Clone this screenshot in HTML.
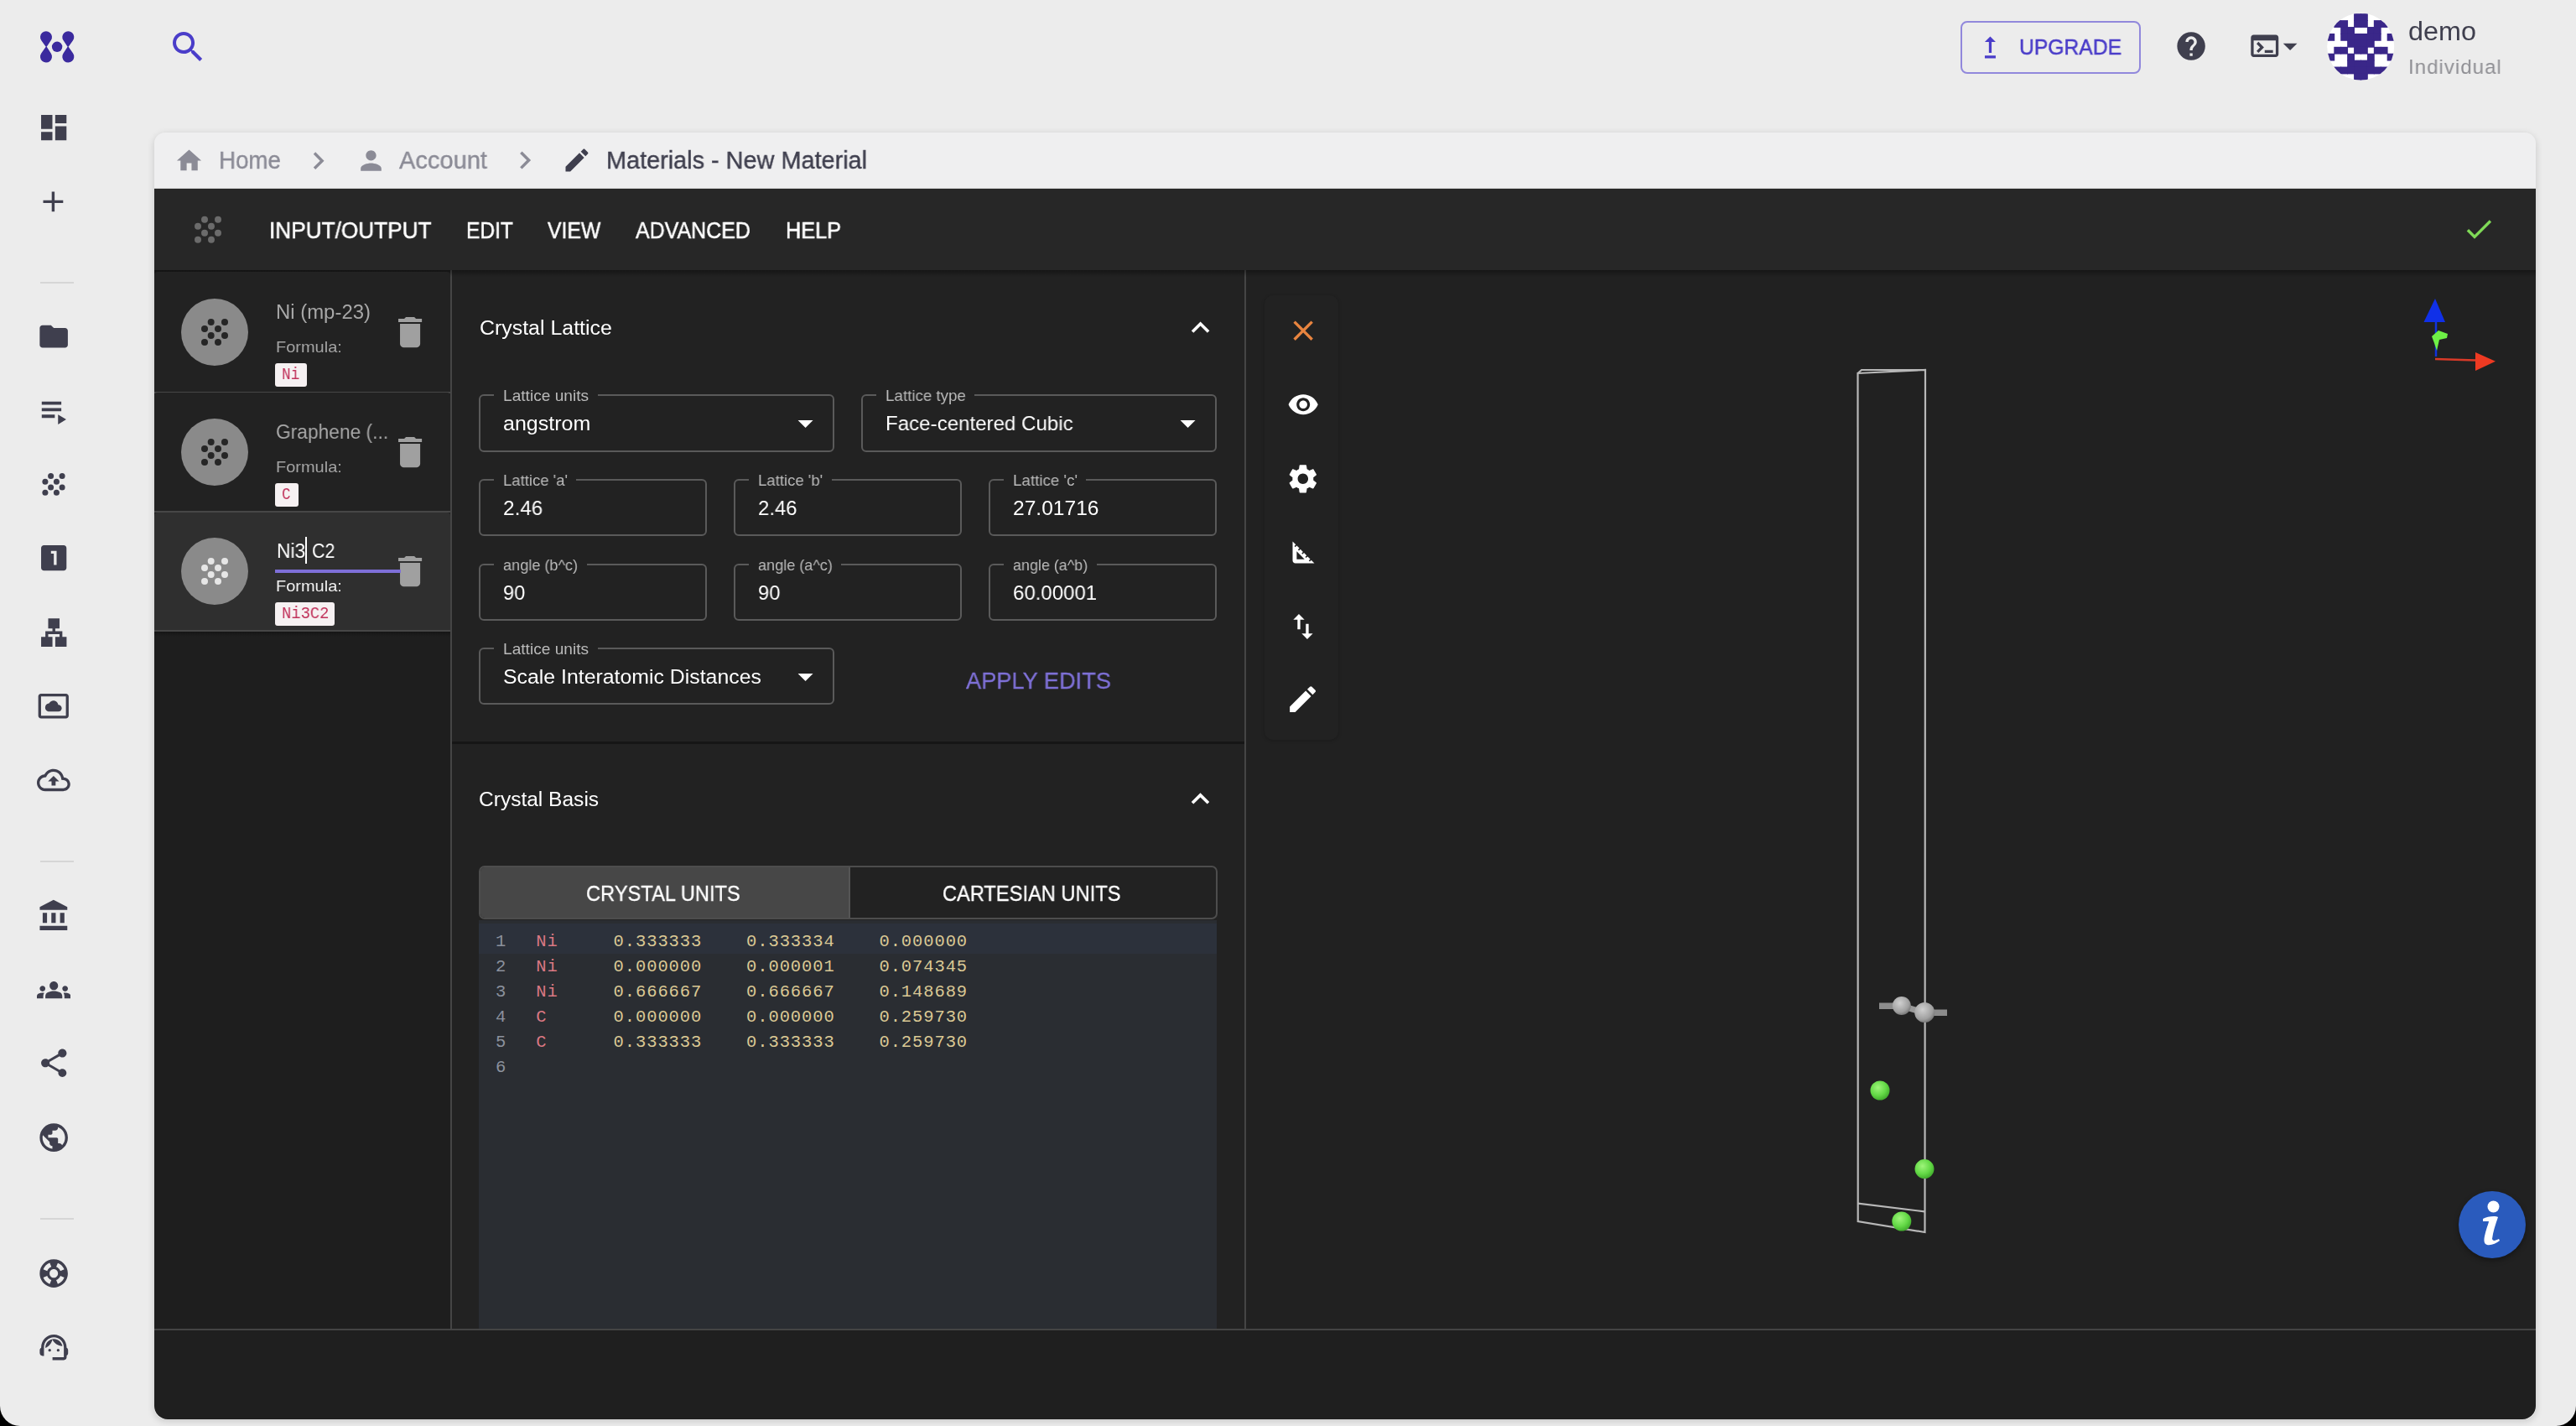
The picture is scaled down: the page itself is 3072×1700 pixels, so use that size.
<!DOCTYPE html><html><head><meta charset="utf-8"><style>html{background:#000;}html,body{margin:0;padding:0;}body{width:3072px;height:1700px;overflow:hidden;position:relative;background:#ececec;border-radius:0 0 24px 24px;font-family:"Liberation Sans",sans-serif;}</style></head><body>
<svg style="position:absolute;left:0;top:0" width="120" height="100" viewBox="0 0 120 100"><path fill="#3b2a9e" d="M55.20,56.50 L49.31,48.28 A7.0,7.0 0 1 1 60.82,48.09 ZM55.20,55.00 L60.88,63.80 A7.0,7.0 0 1 1 49.24,63.62 ZM81.10,56.50 L75.48,48.09 A7.0,7.0 0 1 1 86.99,48.28 ZM81.10,55.00 L87.06,63.62 A7.0,7.0 0 1 1 75.42,63.80 Z"/><circle cx="68.1" cy="55.8" r="6.2" fill="#3b2a9e"/></svg>
<svg style="position:absolute;left:43.93px;top:131.68px;" width="40.33" height="40.33" viewBox="0 0 24 24"><path fill="#3f3f4e" d="M3 13h8V3H3v10zm0 8h8v-6H3v6zm10 0h8V11h-8v10zm0-18v6h8V3h-8z"/></svg>
<svg style="position:absolute;left:43.45px;top:219.75px;" width="40.80" height="40.80" viewBox="0 0 24 24"><path fill="#3f3f4e" d="M19 13h-6v6h-2v-6H5v-2h6V5h2v6h6v2z"/></svg>
<div style="position:absolute;left:48px;top:336px;width:40px;height:2px;background:#d6d6d6;"></div>
<svg style="position:absolute;left:43.87px;top:381.27px;" width="40.26" height="40.26" viewBox="0 0 24 24"><path fill="#3f3f4e" d="M10 4H4c-1.1 0-1.99.9-1.99 2L2 18c0 1.1.9 2 2 2h16c1.1 0 2-.9 2-2V8c0-1.1-.9-2-2-2h-8l-2-2z"/></svg>
<svg style="position:absolute;left:42.43px;top:466.81px;" width="46.69" height="46.69" viewBox="0 0 24 24"><path fill="#3f3f4e" d="M4 10h12v2H4zm0-4h12v2H4zm0 8h8v2H4zm10 0v6l5-3z"/></svg>
<svg style="position:absolute;left:0;top:0" width="100" height="620" viewBox="0 0 100 620"><circle cx="60.6" cy="567.6" r="3.5" fill="#3f3f4e"/><circle cx="74.1" cy="567.6" r="3.5" fill="#3f3f4e"/><circle cx="53.9" cy="574.3" r="3.5" fill="#3f3f4e"/><circle cx="67.4" cy="574.3" r="3.5" fill="#3f3f4e"/><circle cx="60.6" cy="580.9" r="3.5" fill="#3f3f4e"/><circle cx="74.1" cy="580.9" r="3.5" fill="#3f3f4e"/><circle cx="53.9" cy="587.3" r="3.5" fill="#3f3f4e"/><circle cx="67.4" cy="587.3" r="3.5" fill="#3f3f4e"/></svg>
<svg style="position:absolute;left:43.73px;top:644.98px;" width="40.33" height="40.33" viewBox="0 0 24 24"><path fill="#3f3f4e" d="M19 3H5c-1.1 0-2 .9-2 2v14c0 1.1.9 2 2 2h14c1.1 0 2-.9 2-2V5c0-1.1-.9-2-2-2zm-5 14h-2V9h-2V7h4v10z"/></svg>
<svg style="position:absolute;left:43.92px;top:733.57px;" width="40.47" height="40.47" viewBox="0 0 24 24"><path fill="#3f3f4e" d="M13 22h8v-7h-3v-4h-5V9h3V2H8v7h3v2H6v4H3v7h8v-7H8v-2h8v2h-3z"/></svg>
<svg style="position:absolute;left:44.07px;top:821.92px;" width="39.56" height="39.56" viewBox="0 0 24 24"><path fill="#3f3f4e" d="M9 16h6.5c1.38 0 2.5-1.12 2.5-2.5S16.88 11 15.5 11h-.05c-.24-1.69-1.69-3-3.45-3-1.4 0-2.6.83-3.16 2.02h-.16C7.17 10.18 6 11.45 6 13c0 1.66 1.34 3 3 3zM21 3H3c-1.11 0-2 .89-2 2v14c0 1.11.89 2 2 2h18c1.11 0 2-.89 2-2V5c0-1.11-.89-2-2-2zm0 16.01H3V4.99h18v14.02z"/></svg>
<svg style="position:absolute;left:44.00px;top:909.70px;" width="39.80" height="39.80" viewBox="0 0 24 24"><path fill="#3f3f4e" d="M19.35 10.04C18.67 6.59 15.64 4 12 4 9.11 4 6.6 5.64 5.35 8.04 2.34 8.36 0 10.91 0 14c0 3.31 2.69 6 6 6h13c2.76 0 5-2.24 5-5 0-2.64-2.05-4.78-4.65-4.96zM19 18H6c-2.21 0-4-1.79-4-4 0-2.05 1.53-3.76 3.56-3.97l1.07-.11.5-.95C8.08 7.14 9.94 6 12 6c2.62 0 4.88 1.86 5.39 4.43l.3 1.5 1.53.11c1.56.1 2.78 1.41 2.78 2.96 0 1.650-1.35 3-3 3zM8 13h2.55v3h2.9v-3H16l-4-4z"/></svg>
<div style="position:absolute;left:48px;top:1026px;width:40px;height:2px;background:#d6d6d6;"></div>
<svg style="position:absolute;left:44.14px;top:1071.24px;" width="41.45" height="41.45" viewBox="0 0 24 24"><path fill="#3f3f4e" d="M4 10v7h3v-7H4zm6 0v7h3v-7h-3zM2 22h19v-3H2v3zm14-12v7h3v-7h-3zm-4.5-9L2 6v2h19V6l-9.5-5z"/></svg>
<svg style="position:absolute;left:43.80px;top:1159.70px;" width="40.40" height="40.40" viewBox="0 0 24 24"><path fill="#3f3f4e" d="M12 12.75c1.63 0 3.07.39 4.24.9 1.08.48 1.76 1.56 1.76 2.73V18H6v-1.61c0-1.18.68-2.26 1.76-2.73 1.17-.52 2.61-.91 4.24-.91zM4 13c1.1 0 2-.9 2-2s-.9-2-2-2-2 .9-2 2 .9 2 2 2zm1.13 1.1c-.37-.06-.74-.1-1.130-.1-.99 0-1.93.21-2.78.58C.48 14.9 0 15.62 0 16.43V18h4.5v-1.61c0-.83.23-1.61.63-2.29zM20 13c1.1 0 2-.9 2-2s-.9-2-2-2-2 .9-2 2 .9 2 2 2zm4 3.43c0-.81-.48-1.53-1.22-1.85-.85-.37-1.79-.58-2.78-.58-.39 0-.76.04-1.13.1.4.68.63 1.46.63 2.29V18H24v-1.57zM12 6c1.66 0 3 1.34 3 3s-1.34 3-3 3-3-1.34-3-3 1.34-3 3-3z"/></svg>
<svg style="position:absolute;left:43.75px;top:1247.01px;" width="40.51" height="40.51" viewBox="0 0 24 24"><path fill="#3f3f4e" d="M18 16.08c-.76 0-1.44.3-1.96.77L8.91 12.7c.05-.23.09-.46.09-.7s-.04-.47-.09-.7l7.05-4.11c.54.5 1.25.81 2.04.81 1.66 0 3-1.34 3-3s-1.34-3-3-3-3 1.34-3 3c0 .24.04.47.09.7L8.04 9.81C7.5 9.31 6.79 9 6 9c-1.66 0-3 1.34-3 3s1.34 3 3 3c.79 0 1.5-.31 2.04-.81l7.12 4.16c-.05.21-.08.43-.08.65 0 1.61 1.31 2.92 2.92 2.92 1.61 0 2.92-1.31 2.92-2.920s-1.31-2.92-2.92-2.92z"/></svg>
<svg style="position:absolute;left:43.84px;top:1335.54px;" width="40.32" height="40.32" viewBox="0 0 24 24"><path fill="#3f3f4e" d="M12 2C6.48 2 2 6.48 2 12s4.48 10 10 10 10-4.48 10-10S17.52 2 12 2zm-1 17.93c-3.95-.49-7-3.85-7-7.93 0-.62.08-1.21.21-1.79L9 15v1c0 1.1.9 2 2 2v1.93zm6.9-2.54c-.26-.81-1-1.39-1.9-1.39h-1v-3c0-.55-.45-1-1-1H8v-2h2c.55 0 1-.45 1-1V7h2c1.1 0 2-.9 2-2v-.41c2.93 1.19 5 4.06 5 7.41 0 2.08-.8 3.97-2.1 5.39z"/></svg>
<div style="position:absolute;left:48px;top:1452px;width:40px;height:2px;background:#d6d6d6;"></div>
<svg style="position:absolute;left:43.77px;top:1497.72px;" width="40.26" height="40.26" viewBox="0 0 24 24"><path fill="#3f3f4e" d="M12 2C6.48 2 2 6.48 2 12s4.48 10 10 10 10-4.48 10-10S17.52 2 12 2zm7.46 7.12l-2.78 1.15c-.51-1.36-1.58-2.44-2.95-2.94l1.15-2.78c2.1.8 3.77 2.47 4.58 4.57zM12 15c-1.66 0-3-1.34-3-3s1.34-3 3-3 3 1.34 3 3-1.34 3-3 3zM9.13 4.54l1.17 2.78c-1.38.5-2.47 1.59-2.98 2.97L4.54 9.13c.81-2.11 2.48-3.78 4.590-4.59zM4.54 14.87l2.78-1.15c.51 1.38 1.59 2.46 2.97 2.96l-1.17 2.78c-2.1-.81-3.77-2.48-4.58-4.59zm10.34 4.59l-1.15-2.78c1.37-.51 2.45-1.59 2.95-2.97l2.78 1.17c-.81 2.1-2.48 3.77-4.58 4.58z"/></svg>
<svg style="position:absolute;left:43.81px;top:1585.66px;" width="40.59" height="40.59" viewBox="0 0 24 24"><path fill="#3f3f4e" d="M21 12.22C21 6.73 16.74 3 12 3c-4.69 0-9 3.65-9 9.28-.6.34-1 .98-1 1.72v2c0 1.1.9 2 2 2h1v-6.1c0-3.87 3.13-7 7-7s7 3.13 7 7V19h-8v2h8c1.1 0 2-.9 2-2v-1.22c.59-.31 1-.92 1-1.64v-2.3c0-.7-.41-1.31-1-1.62zM9 13a1 1 0 1 0 0 2 1 1 0 1 0 0-2zm6 0a1 1 0 1 0 0 2 1 1 0 1 0 0-2zM18 11.03C17.52 8.18 15.04 6 12.05 6c-3.03 0-6.29 2.51-6.03 6.45 2.47-1.01 4.33-3.21 4.86-5.89 1.31 2.63 4 4.44 7.12 4.47z"/></svg>
<svg style="position:absolute;left:199.58px;top:31.88px;" width="48.16" height="48.16" viewBox="0 0 24 24"><path fill="#4a3dc9" d="M15.5 14h-.79l-.28-.27C15.41 12.59 16 11.11 16 9.5 16 5.91 13.09 3 9.5 3S3 5.910 3 9.5 5.91 16 9.5 16c1.61 0 3.09-.59 4.23-1.57l.27.28v.79l5 4.99L20.49 19l-4.99-5zm-6 0C7.01 14 5 11.99 5 9.5S7.01 5 9.5 5 14 7.01 14 9.5 11.99 14 9.5 14z"/></svg>
<div style="position:absolute;left:2337.5px;top:24.6px;width:211px;height:59px;border:2px solid #9188dc;border-radius:8px;"></div>
<svg style="position:absolute;left:2353.69px;top:37.19px;" width="38.93" height="38.93" viewBox="0 0 24 24"><path fill="#4a3dc9" d="M16 18v2H8v-2h8zM11 7.99V16h2V7.99h3L12 4 8 7.99h3z"/></svg>
<div style="position:absolute;left:2408.00px;top:40.69px;font-size:26px;line-height:31.20px;font-family:'Liberation Sans', sans-serif;color:#4a3dc9;white-space:pre;will-change:transform;transform:scaleX(0.9497);transform-origin:0.00px 0;-webkit-text-stroke:0.5px #4a3dc9;">UPGRADE</div>
<svg style="position:absolute;left:2592.90px;top:35.20px;" width="40.20" height="40.20" viewBox="0 0 24 24"><path fill="#3f3f4e" d="M12 2C6.48 2 2 6.48 2 12s4.48 10 10 10 10-4.48 10-10S17.52 2 12 2zm1 17h-2v-2h2v2zm2.07-7.75l-.9.92C13.45 12.9 13 13.5 13 15h-2v-.5c0-1.1.45-2.1 1.17-2.83l1.24-1.26c.37-.36.59-.86.59-1.41 0-1.1-.9-2-2-2s-2 .9-2 2H8c0-2.21 1.79-4 4-4s4 1.79 4 4c0 .88-.36 1.68-.93 2.25z"/></svg>
<svg style="position:absolute;left:2680.53px;top:35.23px;" width="39.54" height="39.54" viewBox="0 0 24 24"><path fill="#3f3f4e" d="M20 4H4c-1.11 0-2 .9-2 2v12c0 1.1.89 2 2 2h16c1.1 0 2-.9 2-2V6c0-1.1-.89-2-2-2zm0 14H4V8h16v10zm-2-1h-6v-2h6v2zM7.5 17l-1.41-1.41L8.67 13l-2.59-2.59L7.5 9l4 4-4 4z"/></svg>
<svg style="position:absolute;left:2710.65px;top:34.81px;" width="40.20" height="40.20" viewBox="0 0 24 24"><path fill="#3f3f4e" d="M7 10l5 5 5-5z"/></svg>
<svg style="position:absolute;left:2775px;top:15px" width="81" height="82" viewBox="0 0 81 82"><defs><clipPath id="avc"><circle cx="40.2" cy="40.6" r="40"/></clipPath></defs><circle cx="40.2" cy="40.6" r="40" fill="#fff"/><g clip-path="url(#avc)" fill="#3a2789"><rect x="32.08" y="1.20" width="8.82" height="8.82"/><rect x="40.00" y="1.20" width="8.82" height="8.82"/><rect x="8.32" y="9.12" width="8.82" height="8.82"/><rect x="16.24" y="9.12" width="8.82" height="8.82"/><rect x="32.08" y="9.12" width="8.82" height="8.82"/><rect x="40.00" y="9.12" width="8.82" height="8.82"/><rect x="55.84" y="9.12" width="8.82" height="8.82"/><rect x="63.76" y="9.12" width="8.82" height="8.82"/><rect x="16.24" y="17.04" width="8.82" height="8.82"/><rect x="24.16" y="17.04" width="8.82" height="8.82"/><rect x="47.92" y="17.04" width="8.82" height="8.82"/><rect x="55.84" y="17.04" width="8.82" height="8.82"/><rect x="0.40" y="24.96" width="8.82" height="8.82"/><rect x="16.24" y="24.96" width="8.82" height="8.82"/><rect x="24.16" y="24.96" width="8.82" height="8.82"/><rect x="32.08" y="24.96" width="8.82" height="8.82"/><rect x="40.00" y="24.96" width="8.82" height="8.82"/><rect x="47.92" y="24.96" width="8.82" height="8.82"/><rect x="55.84" y="24.96" width="8.82" height="8.82"/><rect x="71.68" y="24.96" width="8.82" height="8.82"/><rect x="24.16" y="32.88" width="8.82" height="8.82"/><rect x="32.08" y="32.88" width="8.82" height="8.82"/><rect x="40.00" y="32.88" width="8.82" height="8.82"/><rect x="47.92" y="32.88" width="8.82" height="8.82"/><rect x="8.32" y="40.80" width="8.82" height="8.82"/><rect x="16.24" y="40.80" width="8.82" height="8.82"/><rect x="32.08" y="40.80" width="8.82" height="8.82"/><rect x="40.00" y="40.80" width="8.82" height="8.82"/><rect x="55.84" y="40.80" width="8.82" height="8.82"/><rect x="63.76" y="40.80" width="8.82" height="8.82"/><rect x="0.40" y="48.72" width="8.82" height="8.82"/><rect x="24.16" y="48.72" width="8.82" height="8.82"/><rect x="47.92" y="48.72" width="8.82" height="8.82"/><rect x="71.68" y="48.72" width="8.82" height="8.82"/><rect x="24.16" y="56.64" width="8.82" height="8.82"/><rect x="32.08" y="56.64" width="8.82" height="8.82"/><rect x="40.00" y="56.64" width="8.82" height="8.82"/><rect x="47.92" y="56.64" width="8.82" height="8.82"/><rect x="8.32" y="64.56" width="8.82" height="8.82"/><rect x="16.24" y="64.56" width="8.82" height="8.82"/><rect x="24.16" y="64.56" width="8.82" height="8.82"/><rect x="32.08" y="64.56" width="8.82" height="8.82"/><rect x="40.00" y="64.56" width="8.82" height="8.82"/><rect x="47.92" y="64.56" width="8.82" height="8.82"/><rect x="55.84" y="64.56" width="8.82" height="8.82"/><rect x="63.76" y="64.56" width="8.82" height="8.82"/><rect x="32.08" y="72.48" width="8.82" height="8.82"/><rect x="40.00" y="72.48" width="8.82" height="8.82"/></g></svg>
<div style="position:absolute;left:2871.80px;top:18.66px;font-size:31px;line-height:37.20px;font-family:'Liberation Sans', sans-serif;color:#3f3f4e;white-space:pre;will-change:transform;transform:scaleX(1.0439);transform-origin:0.00px 0;">demo</div>
<div style="position:absolute;left:2871.80px;top:64.61px;font-size:24.5px;line-height:29.40px;font-family:'Liberation Sans', sans-serif;letter-spacing:1px;color:#8f8f94;white-space:pre;will-change:transform;transform:scaleX(0.9848);transform-origin:0.00px 0;">Individual</div>
<div style="position:absolute;left:184px;top:158px;width:2840px;height:1534px;border-radius:14px;background:transparent;box-shadow:0 2px 8px rgba(0,0,0,0.16);"></div>
<div style="position:absolute;left:184px;top:158px;width:2840px;height:67px;border-radius:13px 13px 0 0;background:#efeff0;"></div>
<svg style="position:absolute;left:207.98px;top:173.71px;" width="35.05" height="35.05" viewBox="0 0 24 24"><path fill="#8b8b96" d="M10 20v-6h4v6h5v-8h3L12 3 2 12h3v8z"/></svg>
<div style="position:absolute;left:261.00px;top:173.30px;font-size:30px;line-height:36.00px;font-family:'Liberation Sans', sans-serif;color:#8b8b96;white-space:pre;will-change:transform;transform:scaleX(0.9238);transform-origin:0.00px 0;-webkit-text-stroke:0.4px #8b8b96;">Home</div>
<svg style="position:absolute;left:359.32px;top:170.87px;" width="41.35" height="41.35" viewBox="0 0 24 24"><path fill="#8b8b96" d="M10 6L8.59 7.41 13.17 12l-4.58 4.59L10 18l6-6z"/></svg>
<svg style="position:absolute;left:423.51px;top:172.86px;" width="36.98" height="36.98" viewBox="0 0 24 24"><path fill="#8b8b96" d="M12 12c2.21 0 4-1.79 4-4s-1.79-4-4-4-4 1.79-4 4 1.79 4 4 4zm0 2c-2.67 0-8 1.34-8 4v2h16v-2c0-2.66-5.33-4-8-4z"/></svg>
<div style="position:absolute;left:476.00px;top:173.30px;font-size:30px;line-height:36.00px;font-family:'Liberation Sans', sans-serif;color:#8b8b96;white-space:pre;will-change:transform;transform:scaleX(0.9682);transform-origin:0.00px 0;-webkit-text-stroke:0.4px #8b8b96;">Account</div>
<svg style="position:absolute;left:604.65px;top:170.47px;" width="42.16" height="42.16" viewBox="0 0 24 24"><path fill="#8b8b96" d="M10 6L8.59 7.41 13.17 12l-4.58 4.59L10 18l6-6z"/></svg>
<svg style="position:absolute;left:669.68px;top:173.04px;" width="35.93" height="35.93" viewBox="0 0 24 24"><path fill="#3f3f4e" d="M3 17.25V21h3.75L17.81 9.94l-3.75-3.75L3 17.25zM20.71 7.04c.39-.39.39-1.02 0-1.41l-2.34-2.34c-.39-.39-1.02-.39-1.41 0l-1.830 1.83 3.75 3.75 1.83-1.83z"/></svg>
<div style="position:absolute;left:722.60px;top:173.30px;font-size:30px;line-height:36.00px;font-family:'Liberation Sans', sans-serif;color:#3f3f4e;white-space:pre;will-change:transform;transform:scaleX(0.9617);transform-origin:0.00px 0;-webkit-text-stroke:0.4px #3f3f4e;">Materials - New Material</div>
<div style="position:absolute;left:184px;top:224px;width:2840px;height:1px;background:#d2d2d2;"></div>
<div style="position:absolute;left:184px;top:225px;width:2840px;height:97px;background:#272727;"></div>
<svg style="position:absolute;left:200px;top:240px" width="80" height="70" viewBox="200 240 80 70"><circle cx="244" cy="261.8" r="4" fill="#6b6b6b"/><circle cx="260" cy="261.8" r="4" fill="#6b6b6b"/><circle cx="236" cy="269.8" r="4" fill="#6b6b6b"/><circle cx="252" cy="269.8" r="4" fill="#6b6b6b"/><circle cx="244" cy="277.8" r="4" fill="#6b6b6b"/><circle cx="260" cy="277.8" r="4" fill="#6b6b6b"/><circle cx="236" cy="285.8" r="4" fill="#6b6b6b"/><circle cx="252" cy="285.8" r="4" fill="#6b6b6b"/></svg>
<div style="position:absolute;left:320.80px;top:258.94px;font-size:27px;line-height:32.40px;font-family:'Liberation Sans', sans-serif;color:#ffffff;white-space:pre;will-change:transform;transform:scaleX(0.9703);transform-origin:0.00px 0;-webkit-text-stroke:0.5px #ffffff;">INPUT/OUTPUT</div>
<div style="position:absolute;left:556.00px;top:258.94px;font-size:27px;line-height:32.40px;font-family:'Liberation Sans', sans-serif;color:#ffffff;white-space:pre;will-change:transform;transform:scaleX(0.9097);transform-origin:0.00px 0;-webkit-text-stroke:0.5px #ffffff;">EDIT</div>
<div style="position:absolute;left:652.70px;top:258.94px;font-size:27px;line-height:32.40px;font-family:'Liberation Sans', sans-serif;color:#ffffff;white-space:pre;will-change:transform;transform:scaleX(0.9176);transform-origin:0.00px 0;-webkit-text-stroke:0.5px #ffffff;">VIEW</div>
<div style="position:absolute;left:758.00px;top:258.94px;font-size:27px;line-height:32.40px;font-family:'Liberation Sans', sans-serif;color:#ffffff;white-space:pre;will-change:transform;transform:scaleX(0.9251);transform-origin:0.00px 0;-webkit-text-stroke:0.5px #ffffff;">ADVANCED</div>
<div style="position:absolute;left:937.00px;top:258.94px;font-size:27px;line-height:32.40px;font-family:'Liberation Sans', sans-serif;color:#ffffff;white-space:pre;will-change:transform;transform:scaleX(0.9366);transform-origin:0.00px 0;-webkit-text-stroke:0.5px #ffffff;">HELP</div>
<svg style="position:absolute;left:2935.58px;top:253.43px;" width="40.15" height="40.15" viewBox="0 0 24 24"><path fill="#7fd957" d="M9 16.17L4.83 12l-1.42 1.41L9 19 21 7l-1.41-1.41z"/></svg>
<div style="position:absolute;left:184px;top:322px;width:354px;height:1263px;background:#1e1e1e;"></div>
<div style="position:absolute;left:537px;top:322px;width:2px;height:1263px;background:#454545;"></div>
<div style="position:absolute;left:539px;top:322px;width:945px;height:1263px;background:#161616;"></div>
<div style="position:absolute;left:539px;top:322px;width:945px;height:562px;background:#222222;"></div>
<div style="position:absolute;left:539px;top:887px;width:945px;height:698px;background:#222222;"></div>
<div style="position:absolute;left:1484px;top:322px;width:2px;height:1263px;background:#454545;"></div>
<div style="position:absolute;left:1486px;top:322px;width:1538px;height:1263px;background:#212121;"></div>
<div style="position:absolute;left:184px;top:322px;width:2840px;height:8px;background:linear-gradient(rgba(0,0,0,0.35),rgba(0,0,0,0));"></div>
<div style="position:absolute;left:184px;top:1586px;width:2840px;height:106px;border-radius:0 0 16px 16px;background:#1f1f1f;"></div>
<div style="position:absolute;left:184px;top:324px;width:353px;height:143px;background:#222222;border-radius:4px 4px 0 0;"></div>
<div style="position:absolute;left:184px;top:467px;width:353px;height:2px;background:#474747;"></div>
<div style="position:absolute;left:216px;top:356px;width:80px;height:80px;border-radius:50%;background:#8a8a8a;"></div>
<svg style="position:absolute;left:230px;top:366px" width="50" height="50" viewBox="230 366 50 50"><circle cx="251.7" cy="384" r="4" fill="#262626"/><circle cx="268" cy="384" r="4" fill="#262626"/><circle cx="244" cy="392" r="4" fill="#262626"/><circle cx="260" cy="392" r="4" fill="#262626"/><circle cx="251.7" cy="400" r="4" fill="#262626"/><circle cx="268" cy="400" r="4" fill="#262626"/><circle cx="244" cy="408" r="4" fill="#262626"/><circle cx="260" cy="408" r="4" fill="#262626"/></svg>
<svg style="position:absolute;left:464.81px;top:371.91px;" width="48.17" height="48.17" viewBox="0 0 24 24"><path fill="#a0a0a0" d="M6 19c0 1.1.9 2 2 2h8c1.1 0 2-.9 2-2V7H6v12zM19 4h-3.5l-1-1h-5l-1 1H5v2h14V4z"/></svg>
<div style="position:absolute;left:329.20px;top:402.72px;font-size:19px;line-height:22.80px;font-family:'Liberation Sans', sans-serif;color:#a3a3a3;white-space:pre;will-change:transform;transform:scaleX(1.0513);transform-origin:0.00px 0;">Formula:</div>
<div style="position:absolute;left:328px;top:433px;width:38px;height:28px;background:#f6f1f2;border-radius:3px;"></div>
<div style="position:absolute;left:335.70px;top:436.10px;font-size:19.5px;line-height:23.40px;font-family:'Liberation Mono', monospace;color:#c0315a;white-space:pre;will-change:transform;transform:scaleX(0.9103);transform-origin:0.00px 0;">Ni</div>
<div style="position:absolute;left:184px;top:468px;width:353px;height:141px;background:#222222;border-radius:4px 4px 0 0;"></div>
<div style="position:absolute;left:184px;top:609px;width:353px;height:2px;background:#474747;"></div>
<div style="position:absolute;left:216px;top:499px;width:80px;height:80px;border-radius:50%;background:#8a8a8a;"></div>
<svg style="position:absolute;left:230px;top:509px" width="50" height="50" viewBox="230 366 50 50"><circle cx="251.7" cy="384" r="4" fill="#262626"/><circle cx="268" cy="384" r="4" fill="#262626"/><circle cx="244" cy="392" r="4" fill="#262626"/><circle cx="260" cy="392" r="4" fill="#262626"/><circle cx="251.7" cy="400" r="4" fill="#262626"/><circle cx="268" cy="400" r="4" fill="#262626"/><circle cx="244" cy="408" r="4" fill="#262626"/><circle cx="260" cy="408" r="4" fill="#262626"/></svg>
<svg style="position:absolute;left:464.81px;top:514.91px;" width="48.17" height="48.17" viewBox="0 0 24 24"><path fill="#a0a0a0" d="M6 19c0 1.1.9 2 2 2h8c1.1 0 2-.9 2-2V7H6v12zM19 4h-3.5l-1-1h-5l-1 1H5v2h14V4z"/></svg>
<div style="position:absolute;left:329.20px;top:545.72px;font-size:19px;line-height:22.80px;font-family:'Liberation Sans', sans-serif;color:#a3a3a3;white-space:pre;will-change:transform;transform:scaleX(1.0513);transform-origin:0.00px 0;">Formula:</div>
<div style="position:absolute;left:328px;top:576px;width:28px;height:28px;background:#f6f1f2;border-radius:3px;"></div>
<div style="position:absolute;left:335.70px;top:579.10px;font-size:19.5px;line-height:23.40px;font-family:'Liberation Mono', monospace;color:#c0315a;white-space:pre;will-change:transform;transform:scaleX(0.8974);transform-origin:0.00px 0;">C</div>
<div style="position:absolute;left:184px;top:611px;width:353px;height:140px;background:#2f2f2f;border-radius:4px 4px 0 0;"></div>
<div style="position:absolute;left:184px;top:751px;width:353px;height:2px;background:#474747;"></div>
<div style="position:absolute;left:216px;top:641px;width:80px;height:80px;border-radius:50%;background:#8a8a8a;"></div>
<svg style="position:absolute;left:230px;top:651px" width="50" height="50" viewBox="230 366 50 50"><circle cx="251.7" cy="384" r="4" fill="#e6e6e6"/><circle cx="268" cy="384" r="4" fill="#e6e6e6"/><circle cx="244" cy="392" r="4" fill="#e6e6e6"/><circle cx="260" cy="392" r="4" fill="#e6e6e6"/><circle cx="251.7" cy="400" r="4" fill="#e6e6e6"/><circle cx="268" cy="400" r="4" fill="#e6e6e6"/><circle cx="244" cy="408" r="4" fill="#e6e6e6"/><circle cx="260" cy="408" r="4" fill="#e6e6e6"/></svg>
<svg style="position:absolute;left:464.81px;top:656.91px;" width="48.17" height="48.17" viewBox="0 0 24 24"><path fill="#a0a0a0" d="M6 19c0 1.1.9 2 2 2h8c1.1 0 2-.9 2-2V7H6v12zM19 4h-3.5l-1-1h-5l-1 1H5v2h14V4z"/></svg>
<div style="position:absolute;left:329.20px;top:687.72px;font-size:19px;line-height:22.80px;font-family:'Liberation Sans', sans-serif;color:#f0f0f0;white-space:pre;will-change:transform;transform:scaleX(1.0513);transform-origin:0.00px 0;">Formula:</div>
<div style="position:absolute;left:328px;top:718px;width:71px;height:28px;background:#f6f1f2;border-radius:3px;"></div>
<div style="position:absolute;left:335.70px;top:721.10px;font-size:19.5px;line-height:23.40px;font-family:'Liberation Mono', monospace;color:#c0315a;white-space:pre;will-change:transform;transform:scaleX(0.9641);transform-origin:0.00px 0;">Ni3C2</div>
<div style="position:absolute;left:329.00px;top:358.46px;font-size:23.5px;line-height:28.20px;font-family:'Liberation Sans', sans-serif;color:#a8a8a8;white-space:pre;will-change:transform;transform:scaleX(1.0177);transform-origin:0.00px 0;">Ni (mp-23)</div>
<div style="position:absolute;left:329.00px;top:501.46px;font-size:23.5px;line-height:28.20px;font-family:'Liberation Sans', sans-serif;color:#a8a8a8;white-space:pre;will-change:transform;transform:scaleX(0.9681);transform-origin:0.00px 0;">Graphene (...</div>
<div style="position:absolute;left:329.60px;top:642.86px;font-size:23.5px;line-height:28.20px;font-family:'Liberation Sans', sans-serif;color:#ffffff;white-space:pre;will-change:transform;transform:scaleX(0.9702);transform-origin:0.00px 0;">Ni3</div>
<div style="position:absolute;left:364px;top:640px;width:2px;height:32px;background:#ffffff;"></div>
<div style="position:absolute;left:372.40px;top:642.86px;font-size:23.5px;line-height:28.20px;font-family:'Liberation Sans', sans-serif;color:#ffffff;white-space:pre;will-change:transform;transform:scaleX(0.9109);transform-origin:0.00px 0;">C2</div>
<div style="position:absolute;left:184px;top:753px;width:353px;height:6px;background:linear-gradient(rgba(0,0,0,0.3),rgba(0,0,0,0));"></div>
<div style="position:absolute;left:328px;top:679px;width:150px;height:4px;background:#7e6fd8;"></div>
<div style="position:absolute;left:571.80px;top:376.56px;font-size:23.5px;line-height:28.20px;font-family:'Liberation Sans', sans-serif;color:#ffffff;white-space:pre;will-change:transform;transform:scaleX(1.0600);transform-origin:0.00px 0;">Crystal Lattice</div>
<svg style="position:absolute;left:1410.16px;top:368.94px;" width="43.17" height="43.17" viewBox="0 0 24 24"><path fill="#ffffff" d="M12 8l-6 6 1.41 1.41L12 10.83l4.59 4.58L18 14z"/></svg>
<div style="position:absolute;left:571px;top:470px;width:420px;height:65px;border:2px solid #5a5a5a;border-radius:6px;"></div>
<div style="position:absolute;left:588.5px;top:468px;width:124.0px;height:6px;background:#222222;"></div>
<div style="position:absolute;left:599.50px;top:460.72px;font-size:19px;line-height:22.80px;font-family:'Liberation Sans', sans-serif;color:#bababa;white-space:pre;will-change:transform;transform:scaleX(1.0063);transform-origin:0.00px 0;">Lattice units</div>
<div style="position:absolute;left:599.50px;top:489.81px;font-size:24.5px;line-height:29.40px;font-family:'Liberation Sans', sans-serif;color:#ffffff;white-space:pre;will-change:transform;transform:scaleX(1.0209);transform-origin:0.00px 0;">angstrom</div>
<svg style="position:absolute;left:939.40px;top:483.00px;" width="43.20" height="43.20" viewBox="0 0 24 24"><path fill="#ffffff" d="M7 10l5 5 5-5z"/></svg>
<div style="position:absolute;left:1027px;top:470px;width:420px;height:65px;border:2px solid #5a5a5a;border-radius:6px;"></div>
<div style="position:absolute;left:1044.5px;top:468px;width:117.9px;height:6px;background:#222222;"></div>
<div style="position:absolute;left:1055.50px;top:460.72px;font-size:19px;line-height:22.80px;font-family:'Liberation Sans', sans-serif;color:#bababa;white-space:pre;will-change:transform;transform:scaleX(0.9868);transform-origin:0.00px 0;">Lattice type</div>
<div style="position:absolute;left:1055.50px;top:489.81px;font-size:24.5px;line-height:29.40px;font-family:'Liberation Sans', sans-serif;color:#ffffff;white-space:pre;will-change:transform;transform:scaleX(0.9834);transform-origin:0.00px 0;">Face-centered Cubic</div>
<svg style="position:absolute;left:1395.40px;top:483.00px;" width="43.20" height="43.20" viewBox="0 0 24 24"><path fill="#ffffff" d="M7 10l5 5 5-5z"/></svg>
<div style="position:absolute;left:571px;top:571px;width:268px;height:64px;border:2px solid #5a5a5a;border-radius:6px;"></div>
<div style="position:absolute;left:588.5px;top:569px;width:98.9px;height:6px;background:#222222;"></div>
<div style="position:absolute;left:599.50px;top:561.72px;font-size:19px;line-height:22.80px;font-family:'Liberation Sans', sans-serif;color:#bababa;white-space:pre;will-change:transform;transform:scaleX(0.9729);transform-origin:0.00px 0;">Lattice 'a'</div>
<div style="position:absolute;left:599.50px;top:590.81px;font-size:24.5px;line-height:29.40px;font-family:'Liberation Sans', sans-serif;color:#ffffff;white-space:pre;will-change:transform;transform:scaleX(0.9905);transform-origin:0.00px 0;">2.46</div>
<div style="position:absolute;left:875px;top:571px;width:268px;height:64px;border:2px solid #5a5a5a;border-radius:6px;"></div>
<div style="position:absolute;left:892.5px;top:569px;width:99.1px;height:6px;background:#222222;"></div>
<div style="position:absolute;left:903.50px;top:561.72px;font-size:19px;line-height:22.80px;font-family:'Liberation Sans', sans-serif;color:#bababa;white-space:pre;will-change:transform;transform:scaleX(0.9755);transform-origin:0.00px 0;">Lattice 'b'</div>
<div style="position:absolute;left:903.50px;top:590.81px;font-size:24.5px;line-height:29.40px;font-family:'Liberation Sans', sans-serif;color:#ffffff;white-space:pre;will-change:transform;transform:scaleX(0.9758);transform-origin:0.00px 0;">2.46</div>
<div style="position:absolute;left:1179px;top:571px;width:268px;height:64px;border:2px solid #5a5a5a;border-radius:6px;"></div>
<div style="position:absolute;left:1196.5px;top:569px;width:98.9px;height:6px;background:#222222;"></div>
<div style="position:absolute;left:1207.50px;top:561.72px;font-size:19px;line-height:22.80px;font-family:'Liberation Sans', sans-serif;color:#bababa;white-space:pre;will-change:transform;transform:scaleX(0.9860);transform-origin:0.00px 0;">Lattice 'c'</div>
<div style="position:absolute;left:1207.50px;top:590.81px;font-size:24.5px;line-height:29.40px;font-family:'Liberation Sans', sans-serif;color:#ffffff;white-space:pre;will-change:transform;transform:scaleX(1.0033);transform-origin:0.00px 0;">27.01716</div>
<div style="position:absolute;left:571px;top:672px;width:268px;height:64px;border:2px solid #5a5a5a;border-radius:6px;"></div>
<div style="position:absolute;left:588.5px;top:670px;width:111.1px;height:6px;background:#222222;"></div>
<div style="position:absolute;left:599.50px;top:662.72px;font-size:19px;line-height:22.80px;font-family:'Liberation Sans', sans-serif;color:#bababa;white-space:pre;will-change:transform;transform:scaleX(0.9541);transform-origin:0.00px 0;">angle (b^c)</div>
<div style="position:absolute;left:599.50px;top:691.81px;font-size:24.5px;line-height:29.40px;font-family:'Liberation Sans', sans-serif;color:#ffffff;white-space:pre;will-change:transform;transform:scaleX(0.9597);transform-origin:0.00px 0;">90</div>
<div style="position:absolute;left:875px;top:672px;width:268px;height:64px;border:2px solid #5a5a5a;border-radius:6px;"></div>
<div style="position:absolute;left:892.5px;top:670px;width:110.9px;height:6px;background:#222222;"></div>
<div style="position:absolute;left:903.50px;top:662.72px;font-size:19px;line-height:22.80px;font-family:'Liberation Sans', sans-serif;color:#bababa;white-space:pre;will-change:transform;transform:scaleX(0.9520);transform-origin:0.00px 0;">angle (a^c)</div>
<div style="position:absolute;left:903.50px;top:691.81px;font-size:24.5px;line-height:29.40px;font-family:'Liberation Sans', sans-serif;color:#ffffff;white-space:pre;will-change:transform;transform:scaleX(0.9671);transform-origin:0.00px 0;">90</div>
<div style="position:absolute;left:1179px;top:672px;width:268px;height:64px;border:2px solid #5a5a5a;border-radius:6px;"></div>
<div style="position:absolute;left:1196.5px;top:670px;width:111.1px;height:6px;background:#222222;"></div>
<div style="position:absolute;left:1207.50px;top:662.72px;font-size:19px;line-height:22.80px;font-family:'Liberation Sans', sans-serif;color:#bababa;white-space:pre;will-change:transform;transform:scaleX(0.9436);transform-origin:0.00px 0;">angle (a^b)</div>
<div style="position:absolute;left:1207.50px;top:691.81px;font-size:24.5px;line-height:29.40px;font-family:'Liberation Sans', sans-serif;color:#ffffff;white-space:pre;will-change:transform;transform:scaleX(0.9798);transform-origin:0.00px 0;">60.00001</div>
<div style="position:absolute;left:571px;top:772px;width:420px;height:64px;border:2px solid #5a5a5a;border-radius:6px;"></div>
<div style="position:absolute;left:588.5px;top:770px;width:124.0px;height:6px;background:#222222;"></div>
<div style="position:absolute;left:599.50px;top:762.72px;font-size:19px;line-height:22.80px;font-family:'Liberation Sans', sans-serif;color:#bababa;white-space:pre;will-change:transform;transform:scaleX(1.0063);transform-origin:0.00px 0;">Lattice units</div>
<div style="position:absolute;left:599.50px;top:791.81px;font-size:24.5px;line-height:29.40px;font-family:'Liberation Sans', sans-serif;color:#ffffff;white-space:pre;will-change:transform;transform:scaleX(1.0139);transform-origin:0.00px 0;">Scale Interatomic Distances</div>
<svg style="position:absolute;left:939.40px;top:785.00px;" width="43.20" height="43.20" viewBox="0 0 24 24"><path fill="#ffffff" d="M7 10l5 5 5-5z"/></svg>
<div style="position:absolute;left:1152.40px;top:795.40px;font-size:28px;line-height:33.60px;font-family:'Liberation Sans', sans-serif;color:#7e70d6;white-space:pre;will-change:transform;transform:scaleX(0.9722);transform-origin:0.00px 0;-webkit-text-stroke:0.3px #7e70d6;">APPLY EDITS</div>
<div style="position:absolute;left:571.40px;top:939.46px;font-size:23.5px;line-height:28.20px;font-family:'Liberation Sans', sans-serif;color:#ffffff;white-space:pre;will-change:transform;transform:scaleX(1.0436);transform-origin:0.00px 0;">Crystal Basis</div>
<svg style="position:absolute;left:1410.36px;top:930.74px;" width="42.97" height="42.97" viewBox="0 0 24 24"><path fill="#ffffff" d="M12 8l-6 6 1.41 1.41L12 10.83l4.59 4.58L18 14z"/></svg>
<div style="position:absolute;left:571px;top:1032px;width:877px;height:60px;border:2px solid #4d4d4d;border-radius:7px;overflow:hidden;"><div style="position:absolute;left:0;top:0;width:439px;height:60px;background:#474747;border-right:2px solid #555;"></div></div>
<div style="position:absolute;left:699.40px;top:1050.24px;font-size:25px;line-height:30.00px;font-family:'Liberation Sans', sans-serif;color:#ffffff;white-space:pre;will-change:transform;transform:scaleX(0.9474);transform-origin:0.00px 0;-webkit-text-stroke:0.3px #fff;">CRYSTAL UNITS</div>
<div style="position:absolute;left:1124.20px;top:1050.24px;font-size:25px;line-height:30.00px;font-family:'Liberation Sans', sans-serif;color:#ffffff;white-space:pre;will-change:transform;transform:scaleX(0.9456);transform-origin:0.00px 0;-webkit-text-stroke:0.3px #fff;">CARTESIAN UNITS</div>
<div style="position:absolute;left:571px;top:1097px;width:880px;height:488px;background:#2a2d32;"></div>
<div style="position:absolute;left:571px;top:1101px;width:880px;height:36px;background:#2c313b;"></div>
<div style="position:absolute;left:591px;top:1110.84px;font-size:20.5px;letter-spacing:0.900px;line-height:24.60px;font-family:'Liberation Mono',monospace;color:#8b919d;white-space:pre;">1</div>
<div style="position:absolute;left:639.20px;top:1110.84px;font-size:20.5px;letter-spacing:0.900px;line-height:24.60px;font-family:'Liberation Mono',monospace;white-space:pre;"><span style="color:#da7883">Ni</span>     <span style="color:#dac894">0.333333    0.333334    0.000000</span></div>
<div style="position:absolute;left:591px;top:1140.94px;font-size:20.5px;letter-spacing:0.900px;line-height:24.60px;font-family:'Liberation Mono',monospace;color:#8b919d;white-space:pre;">2</div>
<div style="position:absolute;left:639.20px;top:1140.94px;font-size:20.5px;letter-spacing:0.900px;line-height:24.60px;font-family:'Liberation Mono',monospace;white-space:pre;"><span style="color:#da7883">Ni</span>     <span style="color:#dac894">0.000000    0.000001    0.074345</span></div>
<div style="position:absolute;left:591px;top:1171.04px;font-size:20.5px;letter-spacing:0.900px;line-height:24.60px;font-family:'Liberation Mono',monospace;color:#8b919d;white-space:pre;">3</div>
<div style="position:absolute;left:639.20px;top:1171.04px;font-size:20.5px;letter-spacing:0.900px;line-height:24.60px;font-family:'Liberation Mono',monospace;white-space:pre;"><span style="color:#da7883">Ni</span>     <span style="color:#dac894">0.666667    0.666667    0.148689</span></div>
<div style="position:absolute;left:591px;top:1201.14px;font-size:20.5px;letter-spacing:0.900px;line-height:24.60px;font-family:'Liberation Mono',monospace;color:#8b919d;white-space:pre;">4</div>
<div style="position:absolute;left:639.20px;top:1201.14px;font-size:20.5px;letter-spacing:0.900px;line-height:24.60px;font-family:'Liberation Mono',monospace;white-space:pre;"><span style="color:#da7883">C</span>      <span style="color:#dac894">0.000000    0.000000    0.259730</span></div>
<div style="position:absolute;left:591px;top:1231.24px;font-size:20.5px;letter-spacing:0.900px;line-height:24.60px;font-family:'Liberation Mono',monospace;color:#8b919d;white-space:pre;">5</div>
<div style="position:absolute;left:639.20px;top:1231.24px;font-size:20.5px;letter-spacing:0.900px;line-height:24.60px;font-family:'Liberation Mono',monospace;white-space:pre;"><span style="color:#da7883">C</span>      <span style="color:#dac894">0.333333    0.333333    0.259730</span></div>
<div style="position:absolute;left:591px;top:1261.34px;font-size:20.5px;letter-spacing:0.900px;line-height:24.60px;font-family:'Liberation Mono',monospace;color:#8b919d;white-space:pre;">6</div>
<div style="position:absolute;left:1508px;top:352px;width:88px;height:530px;border-radius:10px;background:#222222;box-shadow:0 1px 4px rgba(0,0,0,0.2);"></div>
<svg style="position:absolute;left:1533.71px;top:373.91px;" width="40.29" height="40.29" viewBox="0 0 24 24"><path fill="#e8843f" d="M19 6.41L17.59 5 12 10.59 6.41 5 5 6.41 10.59 12 5 17.59 6.41 19 12 13.41 17.59 19 19 17.59 13.41 12z"/></svg>
<svg style="position:absolute;left:1534.82px;top:463.12px;" width="38.36" height="38.36" viewBox="0 0 24 24"><path fill="#ffffff" d="M12 4.5C7 4.5 2.73 7.61 1 12c1.73 4.39 6 7.5 11 7.5s9.27-3.11 11-7.5c-1.73-4.39-6-7.5-11-7.5zM12 17c-2.76 0-5-2.24-5-5s2.24-5 5-5 5 2.24 5 5-2.24 5-5 5zm0-8c-1.66 0-3 1.34-3 3s1.34 3 3 3 3-1.34 3-3-1.34-3-3-3z"/></svg>
<svg style="position:absolute;left:1532.68px;top:549.53px;" width="41.64" height="41.64" viewBox="0 0 24 24"><path fill="#ffffff" d="M19.14 12.94c.04-.3.06-.61.06-.94 0-.32-.02-.64-.07-.94l2.03-1.58c.18-.14.23-.41.12-.61l-1.92-3.32c-.12-.22-.37-.29-.59-.22l-2.39.96c-.5-.38-1.03-.7-1.62-.94l-.36-2.54c-.04-.24-.24-.41-.48-.41h-3.84c-.24 0-.43.17-.47.41l-.36 2.54c-.59.24-1.13.57-1.62.94l-2.39-.96c-.22-.08-.47 0-.59.22L2.74 8.87c-.12.21-.08.47.12.61l2.03 1.58c-.05.3-.09.63-.09.94s.02.64.07.94l-2.03 1.58c-.18.14-.23.41-.12.61l1.92 3.32c.12.22.37.29.59.22l2.39-.96c.5.38 1.03.7 1.62.94l.36 2.54c.05.24.24.41.48.41h3.84c.24 0 .44-.17.47-.41l.36-2.54c.59-.24 1.13-.56 1.62-.94l2.39.96c.22.08.47 0 .59-.22l1.92-3.32c.12-.22.07-.47-.12-.61l-2.01-1.58zM12 15.6c-1.98 0-3.6-1.62-3.6-3.6s1.62-3.6 3.6-3.6 3.6 1.62 3.6 3.6-1.62 3.6-3.6 3.6z"/></svg>
<svg style="position:absolute;left:1534.50px;top:638.50px;" width="39.00" height="39.00" viewBox="0 0 24 24"><path fill="#ffffff" d="M17.66 17.66l-1.06 1.06-.71-.71 1.06-1.06-1.94-1.94-1.06 1.06-.71-.71 1.06-1.06-1.94-1.94-1.06 1.06-.71-.71 1.06-1.06L9.7 9.7l-1.06 1.06-.71-.71 1.06-1.06-1.94-1.94-1.06 1.06-.71-.71 1.06-1.06L4 4v14c0 1.1.9 2 2 2h14l-2.34-2.34zM7 17v-5.76L12.76 17H7z"/></svg>
<svg style="position:absolute;left:1534.27px;top:726.52px;" width="39.95" height="39.95" viewBox="0 0 24 24"><path fill="#ffffff" d="M16 17.01V10h-2v7.01h-3L15 21l4-3.99h-3zM9 3L5 6.99h3V14h2V6.99h3L9 3z"/></svg>
<svg style="position:absolute;left:1533.20px;top:813.31px;" width="41.19" height="41.19" viewBox="0 0 24 24"><path fill="#ffffff" d="M3 17.25V21h3.75L17.81 9.94l-3.75-3.75L3 17.25zM20.71 7.04c.39-.39.39-1.02 0-1.41l-2.34-2.34c-.39-.39-1.02-.39-1.41 0l-1.830 1.83 3.75 3.75 1.83-1.83z"/></svg>
<svg style="position:absolute;left:0;top:0" width="3072" height="1700" viewBox="0 0 3072 1700"><g stroke="#b8b8b8" stroke-width="2.2" fill="none"><path d="M2215.5,445 L2296,441 L2295.5,1469 L2215.7,1456 Z"/><path d="M2215.5,445 L2220,441 L2296,441"/><path d="M2215.7,1434.6 L2295.2,1444.4"/></g><defs><radialGradient id="gg" cx="0.4" cy="0.35" r="0.7"><stop offset="0" stop-color="#9ef57a"/><stop offset="0.6" stop-color="#62d845"/><stop offset="1" stop-color="#3da52a"/></radialGradient><radialGradient id="gr" cx="0.4" cy="0.35" r="0.7"><stop offset="0" stop-color="#d0d0d0"/><stop offset="0.7" stop-color="#a0a0a0"/><stop offset="1" stop-color="#707070"/></radialGradient></defs><path d="M2241,1195.5 L2268,1195.5 L2268,1203 L2241,1203 Z" fill="#8c8c8c"/><path d="M2295,1203.5 L2322,1203.5 L2322,1211 L2295,1211 Z" fill="#8c8c8c"/><path d="M2268,1195.5 L2295,1203.5 L2295,1211 L2268,1203 Z" fill="#9a9a9a"/><circle cx="2267.8" cy="1199" r="11" fill="url(#gr)"/><circle cx="2295.2" cy="1207" r="12" fill="url(#gr)"/><circle cx="2242" cy="1300" r="11.5" fill="url(#gg)"/><circle cx="2295" cy="1393.6" r="11.5" fill="url(#gg)"/><circle cx="2267.8" cy="1456" r="11.5" fill="url(#gg)"/><path d="M2905,425 L2905,383" stroke="#1133dd" stroke-width="2.5"/><path d="M2904,356 L2890.5,384 L2916,384 Z" fill="#1030e8"/><path d="M2908,394 L2900,401 L2903,409 L2906,418 L2909,405 L2918,403 L2919,398 Z" fill="#6ef046"/><path d="M2904,428 L2952,429.5" stroke="#d83a28" stroke-width="2.5"/><path d="M2952,420 L2976,430.7 L2952,442 Z" fill="#ee3a22"/></svg>
<div style="position:absolute;left:2932px;top:1420px;width:80px;height:80px;border-radius:50%;background:#2a5bbd;box-shadow:0 3px 6px rgba(0,0,0,0.35);"></div>
<svg style="position:absolute;left:2932px;top:1420px" width="80" height="80" viewBox="0 0 80 80"><circle cx="41.5" cy="18.5" r="7" fill="#fff"/><path d="M29,33 C34,30 44,29 47,31 C44,40 41,48 40,57 C41,60 44,59 48,57 L49,59 C44,63 36,66 32,63 C29,60 31,53 33,46 C34,42 36,38 36,36 C34,36 31,36 29,36 Z" fill="#fff"/></svg>
<div style="position:absolute;left:184px;top:1584px;width:2840px;height:2px;background:#444444;"></div>
</body></html>
